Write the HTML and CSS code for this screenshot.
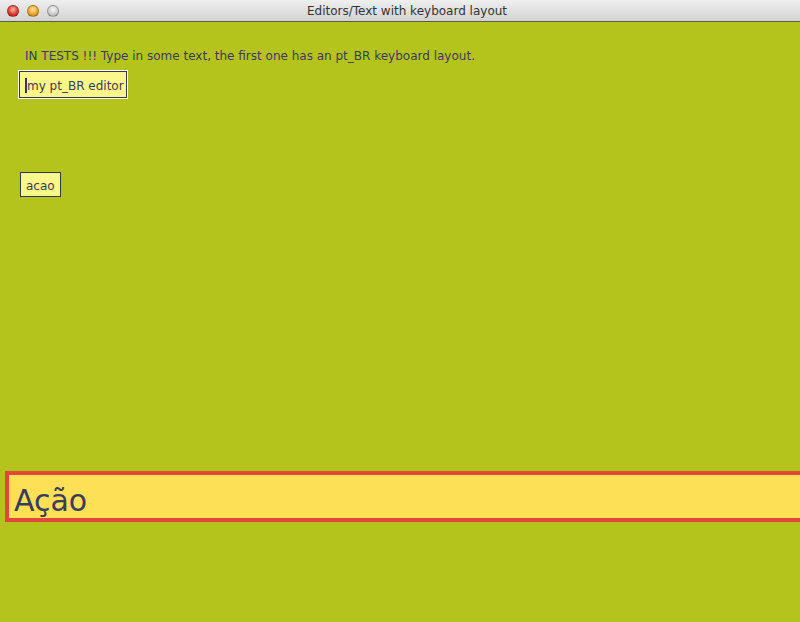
FILE: index.html
```html
<!DOCTYPE html>
<html>
<head>
<meta charset="utf-8">
<link rel="stylesheet" href="styles.css">
</head>
<body>
<div class="window">
  <div class="titlebar">
    <div class="lights">
      <span class="light red"></span>
      <span class="light yellow"></span>
      <span class="light gray"></span>
    </div>
    <div class="title">Editors/Text with keyboard layout</div>
  </div>
  <div class="content">
    <p class="label">IN TESTS !!! Type in some text, the first one has an pt_BR keyboard layout.</p>
    <div class="focus-ring"><div class="field field-first"><span class="caret"></span>my pt_BR editor</div></div>
    <div class="field field-second">acao</div>
    <div class="big-field">Ação</div>
  </div>
</div>
</body>
</html>
```
FILE: styles.css
```css
html, body {
  margin: 0;
  padding: 0;
  width: 800px;
  height: 622px;
  overflow: hidden;
}
body {
  font-family: "DejaVu Sans", sans-serif;
  background: #b5c41c;
}
.window {
  display: flex;
  flex-direction: column;
  height: 622px;
}
.titlebar {
  height: 21px;
  border-bottom: 1px solid #5a5e40;
  background: linear-gradient(#efefef, #d2d2d2);
  display: flex;
  align-items: center;
  position: relative;
}
.lights {
  display: flex;
  gap: 8px;
  padding-left: 7px;
}
.light {
  width: 12px;
  height: 12px;
  border-radius: 50%;
  box-sizing: border-box;
  border: 1px solid rgba(0,0,0,0.25);
}
.light.red { background: radial-gradient(circle at 50% 35%, #ffb3ad, #e2362c 60%, #a8140e); }
.light.yellow { background: radial-gradient(circle at 50% 35%, #ffe6a0, #eda126 60%, #b06a0a); }
.light.gray { background: radial-gradient(circle at 50% 35%, #fafafa, #c9c9c9 60%, #9a9a9a); }
.title {
  position: absolute;
  left: 14px;
  right: 0;
  text-align: center;
  font-family: "DejaVu Sans", sans-serif;
  font-size: 12px;
  color: #333;
  top: 4px;
}
.content {
  flex: 1;
  display: flex;
  flex-direction: column;
  align-items: flex-start;
  padding: 0 0 0 5px;
}
.label {
  margin: 27px 0 0 20px;
  font-size: 12px;
  color: #3b3b5c;
  line-height: 14px;
}
.focus-ring {
  margin: 7px 0 0 13px;
  border: 1px solid #ffffff;
}
.field {
  box-sizing: border-box;
  border: 1px solid #36365a;
  background: #fbf78b;
  color: #3b3b5c;
  font-size: 12px;
  line-height: 14px;
}
.field-first {
  height: 27px;
  padding: 7px 2px 0 5px;
  display: flex;
  align-items: flex-start;
}
.caret {
  width: 2px;
  height: 15px;
  margin-top: -1px;
  background: #36365a;
  align-self: flex-start;
}
.field-second {
  margin: 73px 0 0 15px;
  height: 25px;
  padding: 6px 5px 0 5px;
}
.big-field {
  box-sizing: border-box;
  margin-top: 274px;
  width: 810px;
  height: 51px;
  border: 4px solid #e3473a;
  background: #fee057;
  color: #3b3b5c;
  font-size: 30px;
  line-height: 40px;
  padding: 6px 0 0 5px;
}
```
